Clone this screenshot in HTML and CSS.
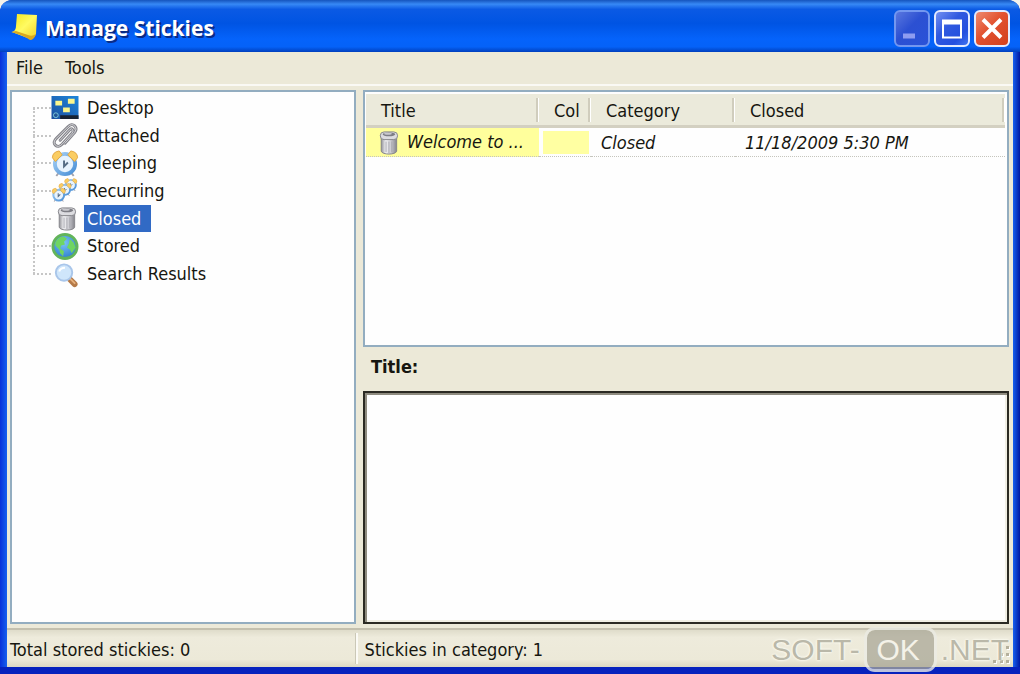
FILE: index.html
```html
<!DOCTYPE html>
<html lang="en">
<head>
<meta charset="utf-8">
<title>Manage Stickies</title>
<link rel="stylesheet" href="styles.css">
</head>
<body>
<svg class="defs" aria-hidden="true">
  <defs>
    <linearGradient id="note" x1="0" y1="0" x2="1" y2="1"><stop offset="0" stop-color="#f4e71c"/><stop offset=".5" stop-color="#fffb62"/><stop offset="1" stop-color="#f2cf25"/></linearGradient>
    <linearGradient id="screen" x1="0" y1="1" x2="1" y2="0"><stop offset="0" stop-color="#1d4f9e"/><stop offset="1" stop-color="#1c86dc"/></linearGradient>
    <linearGradient id="can" x1="0" x2="1"><stop offset="0" stop-color="#929298"/><stop offset=".3" stop-color="#f4f4f6"/><stop offset=".6" stop-color="#cfcfd4"/><stop offset="1" stop-color="#85858c"/></linearGradient>
    <radialGradient id="globe" cx=".45" cy=".35" r=".65"><stop offset="0" stop-color="#7cc4f6"/><stop offset="1" stop-color="#2f7fd0"/></radialGradient>
    <linearGradient id="ring" x1="0" y1="0" x2="1" y2="1"><stop offset="0" stop-color="#a5d0f5"/><stop offset="1" stop-color="#4a8fd6"/></linearGradient>
    <symbol id="i-bin" viewBox="0 0 28 28">
      <path d="M8 6v17c1 4 15 4 16 0V6z" fill="url(#can)" stroke="#85858a"/>
      <path d="M13 13v11M16 13v12M19 13v11" stroke="#a9a9b0" stroke-width="1"/>
      <rect x="7" y="3" width="18" height="8" rx="4" fill="#dcdce0" stroke="#85858a"/>
      <ellipse cx="16" cy="5.500" rx="6.500" ry="2" fill="#7d7d84"/>
      <ellipse cx="15" cy="5" rx="4" ry="1" fill="#c9c9ce"/>
    </symbol>
    <symbol id="i-clock" viewBox="0 0 28 28">
      <path d="M8 23l-3 4M20 23l3 4" stroke="#a4a4ae" stroke-width="2"/>
      <circle cx="14" cy="14.500" r="10.500" fill="#e8f3fd" stroke="url(#ring)" stroke-width="4"/>
      <path d="M1 8q0-6 7-7l3 4-7 7zM27 8q0-6-7-7l-3 4 7 7z" fill="#fbcd62" stroke="#e2a53e"/>
      <path d="M13 11v6l4-4" fill="none" stroke="#566c84" stroke-width="2"/>
    </symbol>
  </defs>
</svg>
<div class="window">
  <header class="titlebar">
    <svg class="app-icon" viewBox="0 0 28 28" aria-hidden="true">
      <path d="M6 0L26 1 25 20q-2 5-6 5L1 18q4-1 4-6z" fill="url(#note)"/>
      <path d="M0 18q12 3 19 8 4 0 6-6-4 3-8 1L5 17z" fill="#dba91e"/>
    </svg>
    <h1 class="caption">Manage Stickies</h1>
    <div class="controls">
      <button class="control dim" aria-label="Minimize"><svg viewBox="0 0 32 32"><path d="M7 21h12v5H7z" fill="#8e9cf0"/></svg></button>
      <button class="control" aria-label="Maximize"><svg viewBox="0 0 32 32"><path d="M6 7h20v19H6zM8 12v12h16V12z" fill="#fff" fill-rule="evenodd"/></svg></button>
      <button class="control close" aria-label="Close"><svg viewBox="0 0 32 32"><path d="M7 7l18 18M25 7L7 25" stroke="#fff" stroke-width="4"/></svg></button>
    </div>
  </header>
  <nav class="menubar"><button class="menu">File</button><button class="menu">Tools</button></nav>
  <main class="content">
    <nav class="panel sidebar">
      <ul class="tree">
        <li class="node"><svg class="icon" viewBox="0 0 28 28"><path d="M0 2h28v24H0z" fill="url(#screen)"/><path d="M9 22h19v4H9z" fill="#172333"/><path d="M4 7h7v5H4zM17 5h7v5h-7zM12 14h7v5h-7z" fill="#fbf68d"/><circle cx="4.500" cy="22" r="2.500" fill="#245798" stroke="#79c6d8"/></svg><button class="label">Desktop</button></li>
        <li class="node"><svg class="icon" viewBox="0 0 28 28"><g fill="none" stroke-linecap="round" stroke-linejoin="round"><path d="M9 19L19 8q2-2 3 0t-1 4L11 23q-4 4-7 1t1-7L17 5q4-4 7-1t0 7L14 22" stroke="#85858b" stroke-width="3"/><path d="M9 19L19 8q2-2 3 0t-1 4L11 23q-4 4-7 1t1-7L17 5q4-4 7-1t0 7L14 22" stroke="#d6d6db" stroke-width="1"/></g></svg><button class="label">Attached</button></li>
        <li class="node"><svg class="icon"><use href="#i-clock"/></svg><button class="label">Sleeping</button></li>
        <li class="node"><svg class="icon" viewBox="0 0 28 28"><use href="#i-clock" x="13" y="1" width="14" height="14"/><use href="#i-clock" x="7" y="6" width="14" height="14"/><use href="#i-clock" x="0" y="11" width="15" height="15"/></svg><button class="label">Recurring</button></li>
        <li class="node"><svg class="icon"><use href="#i-bin"/></svg><button class="label selected" aria-current="true">Closed</button></li>
        <li class="node"><svg class="icon" viewBox="0 0 28 28"><circle cx="14" cy="14" r="12.500" fill="url(#globe)" stroke="#62b45a" stroke-width="3"/><path d="M4 10q3-6 9-6l3 2-3 3 1 3-4 1-1 3 4 3-1 5-3-3-1-4-4-4zM19 6l4 4 2 5-4 6-2-4-3-2 2-4z" fill="#6fd562"/></svg><button class="label">Stored</button></li>
        <li class="node"><svg class="icon" viewBox="0 0 28 28"><path d="M19 19l5 5" stroke="#b57a48" stroke-width="6" stroke-linecap="round"/><path d="M19 18l5 5" stroke="#e6b17c" stroke-width="2" stroke-linecap="round"/><circle cx="13" cy="12" r="8.500" fill="#cfe6fb" stroke="#a9c6ea" stroke-width="2"/><path d="M8 11q1-4 6-4" fill="none" stroke="#fff" stroke-width="2"/></svg><button class="label">Search Results</button></li>
      </ul>
    </nav>
    <section class="details">
      <div class="panel list">
        <table class="notes">
          <colgroup><col class="c-title"><col class="c-color"><col class="c-category"><col></colgroup>
          <thead><tr><th>Title</th><th>Col</th><th>Category</th><th>Closed</th></tr></thead>
          <tbody><tr>
            <td class="note-title"><div class="note-cell"><svg class="icon"><use href="#i-bin"/></svg><span>Welcome to ...</span></div></td>
            <td class="note-color"><div class="swatch"></div></td>
            <td>Closed</td><td>11/18/2009 5:30 PM</td>
          </tr></tbody>
        </table>
      </div>
      <label class="preview-label" for="preview">Title:</label>
      <textarea class="preview" id="preview" readonly></textarea>
    </section>
  </main>
  <footer class="statusbar">
    <span class="status">Total stored stickies: 0</span>
    <span class="status">Stickies in category: 1</span>
    <svg class="grip" viewBox="0 0 20 20" aria-hidden="true"><path d="M15 1h3v3h-3zM9 8h3v3H9zM15 8h3v3h-3zM2 15h3v3H2zM9 15h3v3H9zM15 15h3v3h-3z" fill="#fff"/><path d="M14 0h3v3h-3zM8 7h3v3H8zM14 7h3v3h-3zM1 14h3v3H1zM8 14h3v3H8zM14 14h3v3h-3z" fill="#b5b09c"/></svg>
  </footer>
  <div class="watermark"><span>SOFT-</span><span class="badge">OK</span><span>.NET</span></div>
</div>
</body>
</html>
```
FILE: styles.css
```css
* { box-sizing: border-box; }
body {
  margin: 0;
  background: #f4f2ea;
  color: #161610;
  font: 18px/24px "DejaVu Sans Condensed", "DejaVu Sans", sans-serif;
}
button { border: 0; padding: 0; background: none; color: inherit; font: inherit; }
.defs { position: absolute; width: 0; height: 0; }
.window {
  position: relative;
  display: flex;
  flex-direction: column;
  height: 100vh;
  overflow: hidden;
  padding: 0 7px 7px;
  border-radius: 12px 12px 0 0;
  background: linear-gradient(to right, #0831d9, #1660ef 7px, #1660ef calc(100% - 7px), #0018a0);
  box-shadow: inset 0 -7px #0722bd;
}
.titlebar {
  display: flex;
  align-items: center;
  gap: 6px;
  height: 52px;
  margin: 0 -7px;
  padding: 4px 10px 0 11px;
  background: linear-gradient(#1554bd, #3789f5 8%, #0b5ae4 18%, #0054e3 45%, #0563fb 75%, #0562f8 90%, #0140bd);
}
.app-icon { width: 28px; height: 28px; }
.caption { margin: 0; color: #fff; font: bold 21px/28px "Open Sans", sans-serif; text-shadow: 2px 2px #0a2b86; }
.controls { display: flex; gap: 4px; margin-left: auto; }
.control {
  display: flex;
  width: 36px;
  height: 37px;
  border: 2px solid #e3ebff;
  border-radius: 6px;
  background: linear-gradient(135deg, #7290f2, #3059df 40%, #2450df 75%, #3f74f0);
}
.control svg { width: 100%; height: 100%; }
.control.dim { border-color: #7397f0; background: linear-gradient(135deg, #5a77df, #2c50d2 45%, #2a52d8); }
.control.close { background: linear-gradient(135deg, #ee8b70, #e2512f 45%, #d2401d); }
.menubar {
  display: flex;
  gap: 22px;
  height: 34px;
  padding: 0 9px;
  border-bottom: 2px solid #faf9f4;
  background: #ece9d8;
}
.content {
  display: flex;
  flex: 1;
  gap: 7px;
  min-height: 0;
  padding: 4px 4px 4px 3px;
  background: #ece9d8;
}
.panel { border: 2px solid #93adc0; background: #fefefe; }
.sidebar { flex: 342 1 0; min-width: 0; }
.tree {
  display: grid;
  grid-auto-rows: 1fr;
  height: 194px;
  margin: 2px 0 0 21px;
  padding: 0;
  list-style: none;
}
.node { position: relative; display: flex; align-items: center; }
.node::before { content: ""; width: 18px; border-top: 2px dotted #c6c6c6; }
.node::after { content: ""; position: absolute; left: 0; top: -50%; bottom: 50%; border-left: 2px dotted #c6c6c6; }
.node:first-child::after { display: none; }
.icon { width: 28px; height: 27px; flex: none; }
.label { height: 27px; margin-left: 5px; padding: 0 10px 0 3px; }
.label.selected { background: #316ac5; color: #fff; }
.details { display: flex; flex: 646 1 0; flex-direction: column; min-width: 0; }
.list { flex: 259 1 0; min-height: 0; padding: 2px 2px 0 1px; }
.notes { width: 100%; table-layout: fixed; border-collapse: separate; border-spacing: 0; }
.c-title { width: 173px; }
.c-color { width: 52px; }
.c-category { width: 144px; }
th {
  height: 34px;
  padding: 2px 0 0 15px;
  border-bottom: 3px solid #d3d0c1;
  background: linear-gradient(to right, #fff, #fff) right / 1px 24px no-repeat,
    linear-gradient(to right, #d0cdbd, #d0cdbd) right 1px center / 2px 24px no-repeat, #ebeadb;
  font-weight: normal;
  text-align: left;
}
td { height: 29px; padding: 2px 0 0 10px; border-bottom: 1px dotted #c5c5bd; font-style: italic; white-space: nowrap; }
.note-title { padding: 0 0 0 7px; background: #ffff9c; }
.note-cell { display: flex; align-items: center; gap: 6px; height: 28px; overflow: hidden; }
.note-color { padding: 0 2px 0 4px; }
.swatch { height: 23px; background: #ffffa2; }
.preview-label { height: 44px; padding: 8px; font-weight: bold; font-size: 18px; }
.preview {
  flex: 232 1 0;
  min-height: 0;
  resize: none;
  border: 2px solid #2b2a23;
  border-radius: 0;
  outline: 0;
  background: #fefefe;
  box-shadow: inset 2px 2px #8f8c80, inset -2px -2px #f1efe4;
  font: inherit;
}
.statusbar {
  display: flex;
  align-items: center;
  height: 39px;
  padding: 0 3px;
  border-top: 2px solid #c4c0ae;
  background: linear-gradient(#dfdcca, #eeebdc 20%, #ece9d8 80%, #dcd8c3);
}
.status { flex: 347 1 0; padding: 5px 0 2px; }
.status + .status { flex-grow: 648; padding-left: 7px; border-left: 2px solid #fbfaf5; box-shadow: -1px 0 #cbc8b7; }
.grip { position: absolute; right: 8px; bottom: 8px; width: 20px; height: 20px; }
.watermark {
  position: absolute;
  right: 11px;
  bottom: 2px;
  display: flex;
  align-items: center;
  gap: 4px;
  color: #bab8a9;
  font: 30px/39px "Liberation Sans", sans-serif;
  text-shadow: 0 0 3px #fffef5, 0 0 2px #fffef5;
  pointer-events: none;
}
.badge {
  width: 73px;
  padding-right: 4px;
  border: 3px solid rgba(235, 235, 228, .8);
  border-radius: 11px;
  background: rgba(170, 167, 151, .75);
  background-clip: padding-box;
  color: #f4f2e8;
  text-align: center;
  text-shadow: none;
}
```
